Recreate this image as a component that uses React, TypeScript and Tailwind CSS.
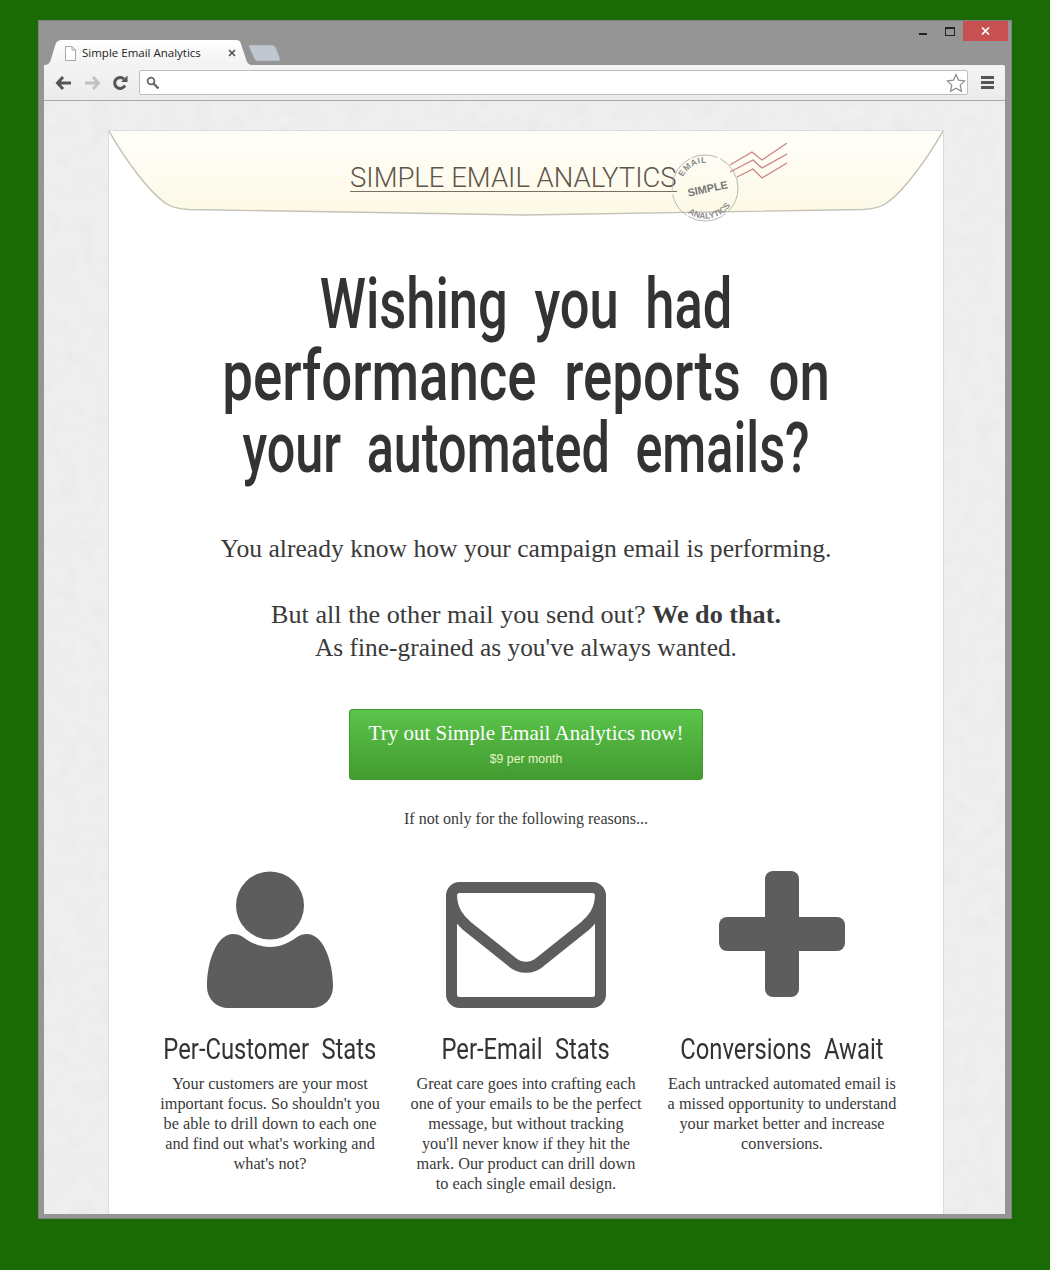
import React from 'react';

const hand = "font-['Roboto',sans-serif] text-[#333] whitespace-nowrap";
const serif = "font-['Liberation_Serif',serif] text-[#3a3a3a]";

const columns = [
  {
    title: 'Per-Customer Stats',
    lines: ['Your customers are your most', "important focus. So shouldn't you", 'be able to drill down to each one', "and find out what's working and", "what's not?"],
    icon: (
      <svg width="126" height="137" viewBox="0 0 126 137" className="mt-[8px] mb-[23px]">
        <circle cx="63" cy="34.5" r="34" fill="#5d5d5d" />
        <path d="M26 63C30 63 33 64 36 66C44 72 53 76 63 76C73 76 82 72 90 66C93 64 96 63 100 63C116 63 126 90 126 115C126 129 116 137 104 137L22 137C10 137 0 129 0 115C0 90 10 63 26 63Z" fill="#5d5d5d" />
      </svg>
    ),
  },
  {
    title: 'Per-Email Stats',
    lines: ['Great care goes into crafting each', 'one of your emails to be the perfect', 'message, but without tracking', "you'll never know if they hit the", 'mark. Our product can drill down', 'to each single email design.'],
    icon: (
      <svg width="160" height="126" viewBox="0 0 160 126" className="mt-[19px] mb-[23px]">
        <rect x="5.5" y="5.5" width="149" height="115" rx="8" fill="none" stroke="#5d5d5d" strokeWidth="11" />
        <path d="M5.5 12C5.5 28 13 37 21 44L66 80C74 87 86 87 94 80L139 44C147 37 154.5 28 154.5 12" fill="none" stroke="#5d5d5d" strokeWidth="11" />
      </svg>
    ),
  },
  {
    title: 'Conversions Await',
    lines: ['Each untracked automated email is', 'a missed opportunity to understand', 'your market better and increase', 'conversions.'],
    icon: (
      <svg width="126" height="126" viewBox="0 0 126 126" className="mt-[8px] mb-[34px]">
        <rect x="46" y="0" width="34" height="126" rx="8" fill="#5d5d5d" />
        <rect x="0" y="46" width="126" height="34" rx="8" fill="#5d5d5d" />
      </svg>
    ),
  },
];

const Stamp = () => (
  <svg width="116" height="82" viewBox="0 0 116 82" className="shrink-0 -ml-[5px]">
    <g fill="none" stroke="#c98080" strokeWidth="1.2">
      <path d="M58 22L80 9L90 17L115 0" />
      <path d="M58 29L81 17L90 25L115 11" />
      <path d="M65 34L81 26L90 35L115 20" />
    </g>
    <circle cx="33" cy="45" r="33" fill="none" stroke="#a5a5a5" strokeWidth="0.8" strokeDasharray="26 3 40 2" />
    <defs>
      <path id="stamp-top" d="M11 34A25 25 0 0 1 44 22" />
      <path id="stamp-bottom" d="M16 70A30 30 0 0 0 63 52" />
    </defs>
    <text fontFamily="Liberation Sans, sans-serif" fontSize="8.5" fontWeight="700" fill="#8c8c8c" letterSpacing=".6">
      <textPath href="#stamp-top">EMAIL</textPath>
    </text>
    <text x="15" y="50" fontFamily="Liberation Sans, sans-serif" fontSize="11" fontWeight="700" fill="#777" transform="rotate(-12 33 45)">SIMPLE</text>
    <text fontFamily="Liberation Sans, sans-serif" fontSize="8.5" fontWeight="700" fill="#8c8c8c">
      <textPath href="#stamp-bottom">ANALYTICS</textPath>
    </text>
  </svg>
);

export default function App() {
  return (
    <div className="w-[1050px] h-[1270px] bg-[#1a6a06] pt-[20px] pl-[38px] overflow-hidden">
      {/* Browser window */}
      <div className="w-[974px] h-[1199px] bg-[#959595] border border-[#808080] flex flex-col pl-[5px] pr-[6px] pb-[4px]">
        {/* Title bar */}
        <div className="h-[44px] shrink-0 flex items-end relative">
          <div className="relative w-[208px] h-[25px] flex items-center pl-[38px] pr-[16px]">
            <svg width="208" height="25" viewBox="0 0 208 25" className="absolute left-0 top-0">
              <defs>
                <linearGradient id="tab-bg" x1="0" y1="0" x2="0" y2="1">
                  <stop offset="0" stopColor="#ffffff" />
                  <stop offset="1" stopColor="#f2f2f2" />
                </linearGradient>
              </defs>
              <path d="M0 25C4 25 6 23 7 19L11 6C12 2 14 0 18 0L192 0C195 0 196 1 197 4L202 19C203 23 205 25 208 25Z" fill="url(#tab-bg)" />
            </svg>
            <svg width="11" height="15" viewBox="0 0 11 15" className="absolute left-[21px] top-[6px]">
              <path d="M.5.5H7L10.5 4V14.5H.5Z M7 .5V4H10.5" fill="#fff" stroke="#a8a8a8" />
            </svg>
            <span className="relative font-['Open_Sans',sans-serif] text-[11.5px] text-[#222] flex-1 whitespace-nowrap">Simple Email Analytics</span>
            <svg width="8" height="8" viewBox="0 0 8 8" className="relative">
              <path d="M1 1L7 7M7 1L1 7" stroke="#555" strokeWidth="1.7" />
            </svg>
          </div>
          <svg width="34" height="17" viewBox="0 0 34 17" className="-ml-[4px] mb-[3px]">
            <path d="M2 0L24 0C26 0 27 1 28 3L32 14C32 15 32 16 30 16L10 16C8 16 7 15 6 13L1 2C1 1 1 0 2 0Z" fill="#c1c7d1" stroke="#9a9ea6" strokeWidth=".5" />
          </svg>
          {/* Window controls */}
          <div className="absolute right-[-3px] top-0 flex items-start">
            <div className="w-[8px] h-[2px] bg-[#222] mt-[12px] mr-[18px]" />
            <div className="w-[10px] h-[9px] border border-[#222] border-t-2 mt-[6px] mr-[8px]" />
            <div className="w-[45px] h-[20px] bg-[#c75050] flex items-center justify-center">
              <svg width="9" height="8" viewBox="0 0 9 8">
                <path d="M1 0.5L8 7.5M8 0.5L1 7.5" stroke="#fff" strokeWidth="1.7" />
              </svg>
            </div>
          </div>
        </div>

        {/* Toolbar */}
        <div className="h-[36px] shrink-0 bg-gradient-to-b from-[#f4f4f4] to-[#ebebeb] border-b border-[#a8a8a8] rounded-tr-[2px] flex items-center pl-[11px] pr-[11px]">
          <svg width="18" height="16" viewBox="0 0 18 16" className="mr-[10px]">
            <path d="M8 2L2.5 8L8 14M3 8H16" fill="none" stroke="#555" strokeWidth="3" />
          </svg>
          <svg width="18" height="16" viewBox="0 0 18 16" className="mr-[11px]">
            <path d="M10 2L15.5 8L10 14M15 8H2" fill="none" stroke="#c2c2c2" strokeWidth="3" />
          </svg>
          <svg width="16" height="16" viewBox="0 0 16 16" className="mr-[11px]">
            <path d="M13 10.5A5.5 5.5 0 1 1 12 4" fill="none" stroke="#555" strokeWidth="3" />
            <path d="M9 7H15.5V.5Z" fill="#555" />
          </svg>
          <div className="flex-1 h-[25px] bg-white border border-[#bdbdbd] rounded-[2px] flex items-center justify-between pl-[6px] pr-[1px]">
            <svg width="14" height="14" viewBox="0 0 14 14">
              <circle cx="5" cy="5" r="3.4" fill="none" stroke="#666" strokeWidth="1.8" />
              <path d="M7.5 7.5L12.5 12.5" stroke="#666" strokeWidth="2.4" />
            </svg>
            <svg width="20" height="20" viewBox="0 0 20 20">
              <path d="M10 1.5L12.6 7.2L18.8 7.9L14.2 12.1L15.5 18.3L10 15.2L4.5 18.3L5.8 12.1L1.2 7.9L7.4 7.2Z" fill="#fff" stroke="#8a8a8a" strokeWidth="1.2" />
            </svg>
          </div>
          <div className="ml-[13px] w-[13px] flex flex-col gap-[2px]">
            <div className="h-[3px] bg-[#555]" />
            <div className="h-[3px] bg-[#555]" />
            <div className="h-[3px] bg-[#555]" />
          </div>
        </div>

        {/* Page */}
        <div className="relative flex-1 min-h-0 bg-[#efefef] overflow-hidden pt-[29px] pl-[64px]">
          {/* Faint paper texture */}
          <svg className="absolute inset-0 w-full h-full">
            <filter id="paper">
              <feTurbulence type="fractalNoise" baseFrequency="0.06" numOctaves="3" seed="4" />
              <feColorMatrix values="0 0 0 0 0.6  0 0 0 0 0.6  0 0 0 0 0.6  0.22 0 0 0 -0.07" />
            </filter>
            <rect width="100%" height="100%" filter="url(#paper)" />
          </svg>

          <div className="relative w-[836px] h-[1100px] bg-white border-x border-t border-[#dcdcdc]">
            {/* Envelope flap header */}
            <div className="relative h-[85px] flex items-start pt-[12px] pl-[241px]">
              <svg width="834" height="85" viewBox="0 0 834 85" className="absolute left-0 top-0">
                <defs>
                  <linearGradient id="flap-bg" x1="0" y1="0" x2="0" y2="1">
                    <stop offset="0" stopColor="#fffefa" />
                    <stop offset="1" stopColor="#fdf9e6" />
                  </linearGradient>
                </defs>
                <path d="M0 0H834C820 25 794 62 776 73C770 77 762 78 754 78.5L417 84L80 78.5C72 78 64 77 58 73C40 62 14 25 0 0Z" fill="url(#flap-bg)" />
                <path d="M0 0C14 25 40 62 58 73C64 77 72 78 80 78.5L417 84L754 78.5C762 78 770 77 776 73C794 62 820 25 834 0" fill="none" stroke="#c4c2b6" strokeWidth="1.4" />
              </svg>
              <span className="relative mt-[22px] font-['Roboto',sans-serif] font-light text-[27.5px] leading-[26px] text-[#5f554a] whitespace-nowrap border-b border-[#7a6f63]">SIMPLE EMAIL ANALYTICS</span>
              <div className="relative"><Stamp /></div>
            </div>

            {/* Headline */}
            <h1 className={`${hand} mt-[52px] text-[70px] leading-[72px] font-medium text-center [word-spacing:18px]`}>
              <span className="block scale-x-[0.75]">Wishing you had</span>
              <span className="block scale-x-[0.78]">performance reports on</span>
              <span className="block scale-x-[0.72]">your automated emails?</span>
            </h1>

            <div className={`${serif} mt-[48px] text-[25.6px] leading-[33px] text-center`}>
              <p>You already know how your campaign email is performing.</p>
              <p className="mt-[33px] text-[26.2px]">But all the other mail you send out? <b>We do that.</b></p>
              <p className="text-[25.4px]">As fine-grained as you've always wanted.</p>
            </div>

            {/* Call to action */}
            <div className="mt-[45px] mx-auto w-[354px] h-[71px] rounded-[3px] border border-[#3f9a30] bg-gradient-to-b from-[#5bc44a] to-[#429b30] flex flex-col items-center pt-[9px]">
              <span className="font-['Liberation_Serif',serif] text-[21px] leading-[28px] text-white whitespace-nowrap">Try out Simple Email Analytics now!</span>
              <span className="font-['Liberation_Sans',sans-serif] text-[12.3px] leading-[18px] text-[#e6f5c8] mt-[3px]">$9 per month</span>
            </div>

            <p className={`${serif} mt-[29px] text-[16px] leading-[20px] text-center`}>If not only for the following reasons...</p>

            {/* Reasons */}
            <div className="mt-[34px] mx-[33px] grid grid-cols-3">
              {columns.map((col) => (
                <div key={col.title} className="flex flex-col items-center">
                  {col.icon}
                  <h2 className={`${hand} text-[29px] leading-[36px] font-normal [word-spacing:8px] scale-x-[0.82]`}>{col.title}</h2>
                  <div className={`${serif} mt-[7px] text-[16.3px] leading-[20px] text-center whitespace-nowrap`}>
                    {col.lines.map((line) => (
                      <div key={line}>{line}</div>
                    ))}
                  </div>
                </div>
              ))}
            </div>
          </div>
        </div>
      </div>
    </div>
  );
}
